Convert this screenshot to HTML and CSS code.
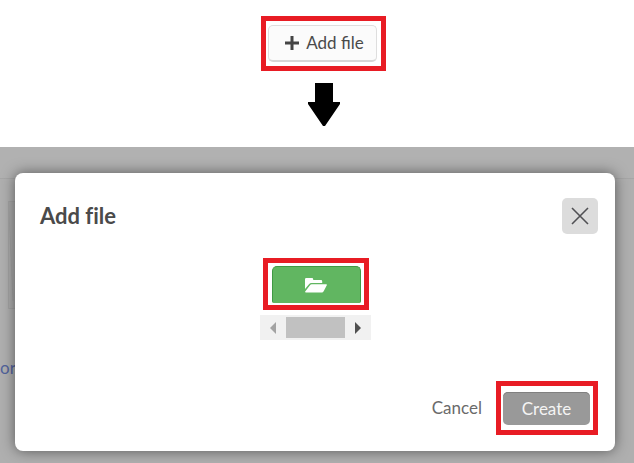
FILE: index.html
```html
<!DOCTYPE html>
<html lang="en">
<head>
    <meta charset="UTF-8">
    <meta name="viewport" content="width=device-width, initial-scale=1.0">
    <title>Add file</title>
    <link rel="stylesheet" href="styles.css">
</head>
<body>
    <div class="toolbar">
        <div class="highlight highlight-add">
            <button type="button" class="add-button">
                <svg width="16" height="16" viewBox="0 0 16 16" aria-hidden="true">
                    <path d="M8 1v14M1 8h14" fill="none" stroke="#444" stroke-width="3"/>
                </svg>
                Add file
            </button>
        </div>
        <svg class="arrow" width="34" height="44" viewBox="0 0 34 44" aria-hidden="true">
            <path d="M8 1h18v19h7v2L18 44h-2L1 22v-2h7z" fill="#000"/>
        </svg>
    </div>

    <div class="stage">
        <div class="page">
            <div class="page-header"></div>
            <div class="page-body">
                <svg class="sheet" width="40" height="108" viewBox="0 0 40 108" aria-hidden="true">
                    <path d="M0 0h40v108H0z" fill="#a9a9a9"/>
                    <path d="M0 0l5 100v7H0z" fill="#adadad"/>
                    <path d="M40 .5H.5L5 100M.5 0v107.500H40" fill="none" stroke="#a3a3a3"/>
                </svg>
                <a href="#" class="page-link">or</a>
            </div>
        </div>

        <div class="dialog" role="dialog" aria-labelledby="dialogTitle">
            <div class="dialog-header">
                <h1 id="dialogTitle">Add file</h1>
                <button type="button" class="close-button" aria-label="Close">
                    <svg width="18" height="18" viewBox="0 0 18 18" aria-hidden="true">
                        <path d="M1 1l16 16M17 1L1 17" fill="none" stroke="#505054" stroke-width="1.600"/>
                    </svg>
                </button>
            </div>

            <div class="picker">
                <div class="highlight highlight-browse">
                    <button type="button" class="browse-button" aria-label="Choose file">
                        <svg width="24" height="16" viewBox="0 0 24 16" aria-hidden="true">
                            <path d="M1 12V2.200Q1 1 2.200 1H8q1.200 0 1.200 1.200V3H17q1.200 0 1.200 1.200V6H7.500Q6 6 5 7.200z" fill="#fff"/>
                            <path d="M1 14.800l5-6.600Q6.600 7.200 7.800 7.200H22q1.400 0 .8 1.100l-3 5.700q-.8 1.500-2 1.500H1.600z" fill="#fff"/>
                        </svg>
                    </button>
                </div>
                <div class="scrollbar">
                    <button type="button" class="scroll-button" aria-label="Scroll left">
                        <svg width="6" height="12" viewBox="0 0 6 12" aria-hidden="true"><path d="M6 0v12L0 6z" fill="#a3a3a3"/></svg>
                    </button>
                    <div class="scroll-thumb"></div>
                    <button type="button" class="scroll-button" aria-label="Scroll right">
                        <svg width="6" height="12" viewBox="0 0 6 12" aria-hidden="true"><path d="M0 0v12l6-6z" fill="#505050"/></svg>
                    </button>
                </div>
            </div>

            <div class="dialog-footer">
                <button type="button" class="cancel-button">Cancel</button>
                <div class="highlight highlight-create">
                    <button type="button" class="create-button">Create</button>
                </div>
            </div>
        </div>
    </div>
</body>
</html>
```

FILE: styles.css
```css
* {
    box-sizing: border-box;
}
body {
    margin: 0;
    min-height: 100vh;
    display: flex;
    flex-direction: column;
    background-color: #fff;
    color: #4a4a4a;
    font-family: Lato, sans-serif;
    font-size: 17px;
    line-height: 24px;
}
button {
    margin: 0;
    padding: 0;
    border: none;
    background: none;
    color: inherit;
    font: inherit;
    cursor: pointer;
}
svg {
    display: block;
}

/* Red frames round the controls to click */
.highlight {
    border: 5px solid #e81c24;
    background-color: #fff;
}
.highlight-add {
    padding: 4px 4px 4px 2px;
}
.highlight-browse {
    padding: 3px 3px 2px 4px;
}
.highlight-create {
    padding: 6px 3px 5px 2px;
}

/* Toolbar */
.toolbar {
    display: flex;
    flex-direction: column;
    align-items: center;
    gap: 11px;
    padding: 16px 0 21px 13px;
}
.add-button {
    display: flex;
    align-items: center;
    gap: 6px;
    height: 37px;
    padding: 0 12px 0 15px;
    border: 1px solid #dedede;
    border-bottom: 2px solid #d6d6d6;
    border-radius: 5px;
    background-color: #fbfbfb;
}

/* Dimmed page, with the dialog stacked over it */
.stage {
    flex: 1;
    display: grid;
}
.page,
.dialog {
    grid-area: 1 / 1;
}
.page {
    background-color: #afafaf;
    overflow: hidden;
}
.page-header {
    height: 32px;
    background-color: #b1b1b1;
    border-bottom: 1px solid #a6a6a6;
}
.page-body {
    display: flex;
    flex-direction: column;
    align-items: flex-start;
    gap: 47px;
    padding-top: 22px;
}
.sheet {
    margin-left: 8px;
}
.page-link {
    color: #52639c;
    text-decoration: none;
}

/* Dialog */
.dialog {
    z-index: 1;
    display: flex;
    flex-direction: column;
    margin: 26px 19px 12px 15px;
    padding: 25px 17px 16px 25px;
    border-radius: 8px;
    background-color: #fff;
    box-shadow: 0 0 14px rgba(0, 0, 0, 0.5);
}
.dialog-header {
    display: flex;
    align-items: center;
    justify-content: space-between;
}
.dialog-header h1 {
    margin: 0;
    font-size: 22px;
    font-weight: 700;
    font-variant-ligatures: none;
}
.close-button {
    display: flex;
    align-items: center;
    justify-content: center;
    width: 36px;
    height: 36px;
    border-radius: 5px;
    background-color: #dcdcdc;
}
.picker {
    display: flex;
    flex-direction: column;
    align-items: center;
    gap: 5px;
    padding: 24px 7px 0 0;
}
.browse-button {
    display: flex;
    align-items: center;
    justify-content: center;
    width: 89px;
    height: 37px;
    border: 1px solid #3f9a43;
    border-bottom: none;
    border-radius: 5px 5px 2px 2px;
    background-color: #61b661;
}
.scrollbar {
    display: flex;
    width: 111px;
    height: 25px;
    padding: 2px 0;
    background-color: #f1f1f1;
}
.scroll-thumb {
    flex: 1;
    background-color: #c1c1c1;
}
.scroll-button {
    display: flex;
    align-items: center;
    justify-content: center;
    width: 26px;
}
.dialog-footer {
    display: flex;
    align-items: center;
    justify-content: flex-end;
    gap: 14px;
    margin-top: auto;
}
.cancel-button {
    color: #6a6a6a;
}
.create-button {
    width: 87px;
    height: 33px;
    border-radius: 5px;
    background-color: #999;
    box-shadow: inset 0 1px 0 #808080;
    color: #f4f4f4;
}
```
